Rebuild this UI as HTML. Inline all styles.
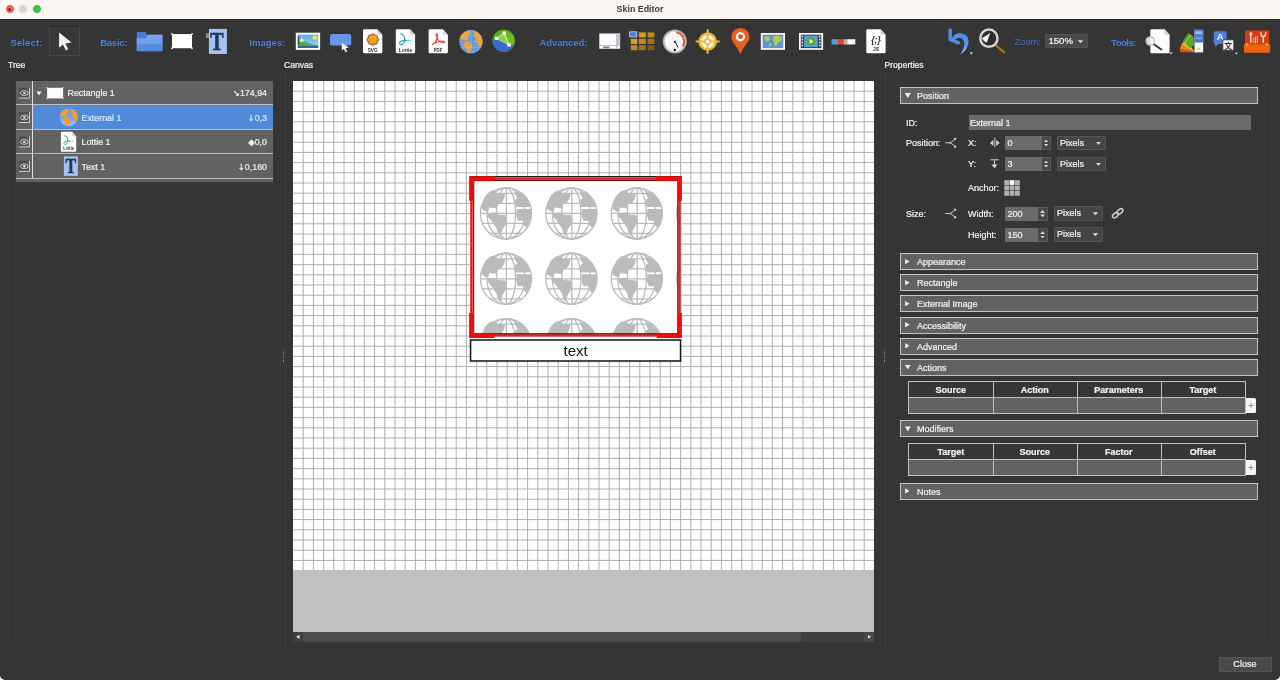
<!DOCTYPE html>
<html lang="en">
<head>
<meta charset="utf-8">
<title>Skin Editor</title>
<style>
*{box-sizing:border-box;margin:0;padding:0}
html,body{width:1280px;height:680px;overflow:hidden;background:#fff}
body{font-family:"Liberation Sans",sans-serif;font-size:9px;color:#f0f0f0;position:relative}
.abs,.abs *{position:absolute}
#win{will-change:transform;position:absolute;left:0;top:0;width:1280px;height:680px;background:#353535;border-radius:0 0 5px 5px;overflow:hidden}
#titlebar{position:absolute;left:0;top:0;width:1280px;height:18.8px;background:#fbf6f2}
.tl{position:absolute;top:5.3px;width:8.2px;height:8.2px;border-radius:50%}
#title{position:absolute;left:0;width:1280px;top:4.1px;text-align:center;font-weight:bold;font-size:8.9px;color:#3b3b3b;letter-spacing:0}
.t{position:absolute;white-space:nowrap;line-height:12px}
.t,.pl,.fld,.dd,.th{-webkit-text-stroke:0.22px currentColor}
.lab{position:absolute;white-space:nowrap;line-height:12px;font-weight:bold;color:#4c82d2;font-size:9.6px;text-shadow:0 0 1px rgba(20,40,90,.9)}
.frame{position:absolute;border:1px solid #3a3a3a}
.ico{position:absolute;overflow:visible}
/* tree */
#tree{position:absolute;left:16px;top:81px;width:256.5px;height:100.5px;background:#626262}
.row{position:absolute;left:0;width:256.5px;height:24.4px;border-bottom:1.2px solid #bdbdbd}
.row.sel .rbg{position:absolute;left:17px;right:0;top:0;bottom:0;background:#528ada}
.vline{position:absolute;left:16px;top:0;width:1.2px;height:96.6px;background:#e0e0e0}
.ar{font-family:"DejaVu Sans",sans-serif;font-size:8.5px}
/* props */
.sec{position:absolute;left:900px;width:357.5px;height:17px;background:#626262;border:1px solid #c4c4c4}
.sec .t{left:16px;top:2px;font-size:9px;color:#f2f2f2}
.tri-d{position:absolute;left:3.7px;top:5px;width:6.2px;height:4.9px;background:#f2f2f2;clip-path:polygon(0 0,100% 0,50% 100%)}
.tri-r{position:absolute;left:4.1px;top:4.6px;width:4.5px;height:5.3px;background:#f2f2f2;clip-path:polygon(0 0,100% 50%,0 100%)}
.fld{position:absolute;background:#6a6a6a;color:#f2f2f2;font-size:9px;line-height:14px;padding-left:2.5px;padding-top:1px;white-space:nowrap}
.dd{position:absolute;background:#454545;border:1px solid #555;color:#f2f2f2;font-size:9px;line-height:13px;padding-left:2px;white-space:nowrap;border-radius:1px}
.dd:after{content:"";position:absolute;right:3.8px;top:5.2px;width:5.6px;height:3px;background:#d6d6d6;clip-path:polygon(0 0,100% 0,50% 100%)}
.spin{position:absolute;width:9.8px;height:14px;background:#474747;border:1px solid #585858;border-left:0}
.spin:before{content:"";position:absolute;left:2.2px;top:2.4px;width:4.8px;height:2.8px;background:#dcdcdc;clip-path:polygon(50% 0,100% 100%,0 100%)}
.spin:after{content:"";position:absolute;left:2.2px;bottom:2.4px;width:4.8px;height:2.8px;background:#dcdcdc;clip-path:polygon(0 0,100% 0,50% 100%)}
.pl{position:absolute;white-space:nowrap;line-height:12px;font-size:9px;color:#f2f2f2}
.tbl{position:absolute;left:907.8px;width:338.7px;height:33.2px;border:1px solid #c0c0c0;background:#626262}
.tbl .h{position:absolute;left:0;top:0;width:100%;height:16.2px;background:#363636}
.tbl .c{position:absolute;top:0;height:31px;width:1px;background:#c0c0c0}
.tbl .hl{position:absolute;left:0;top:15.6px;width:100%;height:1px;background:#c0c0c0}
.tbl .th{position:absolute;top:2.5px;width:84px;text-align:center;font-weight:bold;font-size:9px;line-height:12px;color:#f2f2f2}
.plus{position:absolute;left:1246px;width:9.9px;height:15.6px;background:#f6f6f6;border-radius:0 1.5px 1.5px 0;color:#8c8c8c;font-size:10.5px;line-height:15.6px;text-align:center}
</style>
</head>
<body>
<div id="win">
 <div id="titlebar">
  <div class="tl" style="left:5.5px;background:#fd6a64;border:0.7px solid #d84c4a"></div>
  <div class="tl" style="left:18.9px;background:#d8d5d2"></div>
  <div class="tl" style="left:32.7px;background:#3cc544;border:0.6px solid #2cab36"></div>
  <div style="position:absolute;left:8.1px;top:7.9px;width:3px;height:3px;border-radius:50%;background:#8c1010"></div>
  <div id="title">Skin Editor</div>
 </div>

 <div style="position:absolute;left:0;top:18.8px;width:1280px;height:1.1px;background:#2b2b2b"></div>
 <!-- TOOLBAR -->
 <div id="toolbar">
  <div class="lab" style="left:10.5px;top:36.6px;letter-spacing:0.07px">Select:</div>
  <div style="position:absolute;left:48.6px;top:26.3px;width:31.4px;height:29.8px;background:#383838;border:1px solid #484848;border-top-color:#262626"></div>
  <div class="lab" style="left:100.2px;top:36.6px;letter-spacing:-0.3px">Basic:</div>
  <div class="lab" style="left:249.3px;top:36.6px;letter-spacing:-0.02px">Images:</div>
  <div class="lab" style="left:539.4px;top:36.6px;letter-spacing:-0.12px">Advanced:</div>
  <div class="lab" style="left:1014.4px;top:36.3px;font-weight:normal;font-size:9.3px;color:#4b75ba">Zoom:</div>
  <div class="lab" style="left:1111px;top:36.6px;letter-spacing:-0.5px">Tools:</div>
  <div class="dd" style="left:1045.4px;top:34.1px;width:42.7px;height:14.4px;font-size:9.6px;line-height:12.6px;background:#4a4a4a;border-color:#525252">150%</div>
<svg id="tbicons" class="ico" style="left:0;top:19px" width="1280" height="40" viewBox="0 19 1280 40" font-family="Liberation Sans, sans-serif">
<defs>
 <linearGradient id="gsky" x1="0" y1="0" x2="0" y2="1"><stop offset="0" stop-color="#5aaee6"/><stop offset="1" stop-color="#9ad4ee"/></linearGradient>
 <linearGradient id="gfold" x1="0" y1="0" x2="0" y2="1"><stop offset="0" stop-color="#78a8ee"/><stop offset="0.55" stop-color="#6a9ce8"/><stop offset="0.56" stop-color="#5a8fe0"/><stop offset="1" stop-color="#5088da"/></linearGradient>
 <g id="page"><path d="M0 1.2Q0 0 1.2 0H14.2L19.3 5.6V22.8Q19.3 24 18.1 24H1.2Q0 24 0 22.8Z" fill="#fdfdfd"/><path d="M14.2 0L19.3 5.6H15.2Q14.2 5.6 14.2 4.6Z" fill="#d4d4d4"/></g>
 <linearGradient id="gundo" x1="0" y1="0" x2="0" y2="1"><stop offset="0" stop-color="#4c8cec"/><stop offset="0.6" stop-color="#5c94e6"/><stop offset="1" stop-color="#b4ccee"/></linearGradient>
 <clipPath id="cfan"><rect x="1180.1" y="30" width="15" height="22.5"/></clipPath>
 <clipPath id="cglobe"><circle cx="470.9" cy="41.7" r="11.6"/></clipPath>
 <clipPath id="cgreen"><circle cx="503.7" cy="40.6" r="11.2"/></clipPath>
</defs>
<!-- select arrow -->
<path d="M59.1 32.4V47.8L62.9 44.4L66 50.4L68.3 49.3L65.3 43.4L71.5 42.6Z" fill="#f4f4f4"/>
<!-- folder -->
<path d="M136.7 33Q136.7 31.9 137.8 31.9H144.6Q145.5 31.9 146 32.8L147 34.7H161.4Q162.5 34.7 162.5 35.8V50.1Q162.5 51.2 161.4 51.2H137.8Q136.7 51.2 136.7 50.1Z" fill="#4a7ccc"/>
<path d="M136.7 38.2H145.2Q146.2 38.2 146.7 37.3L147.6 35.6Q148 34.7 149 34.7H161.4Q162.5 34.7 162.5 35.8V50.1Q162.5 51.2 161.4 51.2H137.8Q136.7 51.2 136.7 50.1Z" fill="url(#gfold)"/>
<!-- rectangle -->
<rect x="172" y="34.1" width="20" height="14.1" fill="#fff"/>
<g fill="#e8dcdc"><circle cx="172" cy="34.1" r="1"/><circle cx="192" cy="34.1" r="1"/><circle cx="172" cy="48.2" r="1"/><circle cx="192" cy="48.2" r="1"/></g>
<!-- text icon -->
<rect x="206" y="33.2" width="3" height="4.7" fill="#8c8c8c"/>
<rect x="208.9" y="28.9" width="18" height="25.1" fill="#a6c3f0"/>
<text x="216.9" y="50.4" text-anchor="middle" font-family="Liberation Serif, serif" font-weight="bold" font-size="25.5" fill="#1f3763" stroke="#1f3763" stroke-width="0.7" transform="translate(216.9 0) scale(0.78 1) translate(-216.9 0)">T</text>
<!-- picture -->
<rect x="295.8" y="32.7" width="24.3" height="17.2" fill="#fafafa"/>
<rect x="297.8" y="34.6" width="20.4" height="13.2" fill="url(#gsky)"/>
<path d="M297.8 43.5Q303 39.5 308 42.8Q313 45 318.2 45.5V47.8H297.8Z" fill="#58aa3c"/>
<path d="M299.5 41.5L301.6 37.6L304.2 41.6Z" fill="#f0f0f0"/>
<rect x="297.8" y="36" width="1.5" height="9" fill="#2a5a30"/>
<rect x="297.8" y="46.1" width="20.4" height="1.7" fill="#2c54a6"/>
<circle cx="314.8" cy="37.6" r="2.4" fill="#f2e23a"/>
<!-- button -->
<rect x="330" y="34" width="21.2" height="11.4" rx="2.2" fill="#6a96e4"/>
<path d="M341.8 42.6V50.6L343.9 48.9L345.6 52.3L347.2 51.5L345.6 48.2L348.9 47.8Z" fill="#f0f0f0"/>
<!-- svg file -->
<use href="#page" x="363" y="29.2"/>
<g transform="translate(372.8 39.6)"><g fill="#f2a22c" stroke="#7a4a10" stroke-width="0.8"><circle cx="3.90" cy="0.00" r="1.9"/><circle cx="2.76" cy="2.76" r="1.9"/><circle cx="0.00" cy="3.90" r="1.9"/><circle cx="-2.76" cy="2.76" r="1.9"/><circle cx="-3.90" cy="0.00" r="1.9"/><circle cx="-2.76" cy="-2.76" r="1.9"/><circle cx="-0.00" cy="-3.90" r="1.9"/><circle cx="2.76" cy="-2.76" r="1.9"/></g><circle r="4" fill="#f2a22c"/></g>
<text x="372.7" y="51.6" text-anchor="middle" font-weight="bold" font-size="5.6" fill="#2e2e2e" textLength="10" lengthAdjust="spacingAndGlyphs">SVG</text>
<!-- lottie file -->
<use href="#page" x="395.8" y="29.2"/>
<path d="M400.5 33.8Q404 34.2 404.6 38.2Q405.2 42.6 402.6 44.2Q400.2 45.4 399.6 43.4Q399.2 41.2 403 40.6L407 40.4" fill="none" stroke="#1fa8a0" stroke-width="1.1" stroke-linecap="round"/>
<path d="M407.8 40.4H411.5" stroke="#1fa8a0" stroke-width="1" stroke-dasharray="1.2 0.9" fill="none"/>
<text x="405.5" y="51.5" text-anchor="middle" font-weight="bold" font-size="5.4" fill="#3a3a3a" textLength="13.6" lengthAdjust="spacingAndGlyphs">Lottie</text>
<!-- pdf file -->
<use href="#page" x="428.6" y="29.2"/>
<path d="M432.5 44.6Q435.6 43 437 38.6Q438.2 34.6 437 33.6Q435.8 33.4 436.2 36Q437 40.2 441.2 42.2Q444.4 43.4 444.6 42Q444.4 40.8 440.6 41.2Q436 41.8 433.4 43.8Q431.8 45.2 432.5 44.6Z" fill="none" stroke="#e0403c" stroke-width="1.1" stroke-linejoin="round"/>
<text x="438.1" y="51.5" text-anchor="middle" font-weight="bold" font-size="5.4" fill="#3a3a3a" textLength="8.8" lengthAdjust="spacingAndGlyphs">PDF</text>
<!-- earth -->
<circle cx="470.9" cy="41.7" r="12" fill="#2c446c"/>
<circle cx="470.9" cy="41.7" r="11.6" fill="#6496de"/>
<g clip-path="url(#cglobe)">
 <path d="M460 35L463.5 31.5L469.5 30.5L470.5 33.5L467.5 36.5L469 39L465 40.5L462 39.5L459 40Z" fill="#f5a01e"/>
 <path d="M463.5 42.5L468.5 41.8L472.6 44.5L471.6 48L469.4 52.5L467.6 53L466.4 48.5L463.5 45.5Z" fill="#f5a01e"/>
 <path d="M474.5 31L479 32L483 37L483.5 42.5L481.5 47L478.5 46L477 42L474.8 40.6L476.5 37.5L473.5 35.5Z" fill="#f5a01e"/>
 <g fill="none" stroke="#a9c4ec" stroke-width="0.5" opacity="0.8"><ellipse cx="470.9" cy="41.7" rx="4.5" ry="11.6"/><ellipse cx="470.9" cy="41.7" rx="9" ry="11.6"/><path d="M459 36H483M459 41.7H483M459 47.5H483M470.9 30V54"/></g>
</g>
<!-- green globe -->
<circle cx="503.7" cy="40.6" r="11.6" fill="#2a3c2a"/>
<circle cx="503.7" cy="40.6" r="11.2" fill="#5aaa22"/>
<g clip-path="url(#cgreen)">
 <path d="M496.6 38.4L504.2 32.9L509.1 45Z" fill="#8ed032"/>
 <path d="M504.2 32.9L513 34L515 44L509.1 45Z" fill="#6cbc28"/>
 <path d="M490 40.8Q497 37 503 41.2Q509 46.6 516 44.8V54H490Z" fill="#3c6cc4"/>
 <path d="M496.6 38.4L504.2 32.9L509.1 45Z" fill="none" stroke="#eef6e0" stroke-width="0.8"/>
 <path d="M504.2 32.9L507 40" stroke="#eef6e0" stroke-width="0.6"/>
</g>
<g fill="#fbfbfb"><rect x="494.9" y="36.9" width="3.4" height="3"/><rect x="502.5" y="31.5" width="3.4" height="3"/><rect x="507.3" y="43.4" width="3.6" height="3.2"/></g>
<!-- scroll area -->
<rect x="599.3" y="33.5" width="20.8" height="15.3" fill="#fcfcfc"/>
<rect x="616.8" y="33.5" width="3.3" height="11.7" fill="#c4cbd8"/>
<rect x="599.3" y="45.2" width="20.8" height="0.7" fill="#a0a8b8"/><rect x="616.4" y="33.5" width="0.7" height="15.3" fill="#a0a8b8"/>
<rect x="603" y="46.5" width="6.4" height="1.9" fill="#5a86d4"/>
<!-- grid icon -->
<g>
 <rect x="629.2" y="31.4" width="8" height="6" fill="#c8d8f0"/><rect x="630" y="32.2" width="6.4" height="4.4" fill="#4f80d2"/>
 <rect x="638.8" y="32.4" width="7" height="5" fill="#dc9c20"/><rect x="647.6" y="32.4" width="6.8" height="5" fill="#c48a20"/>
 <rect x="630.8" y="38.8" width="6.6" height="5.2" fill="#dc9c20"/><rect x="638.8" y="38.8" width="7" height="5.2" fill="#c48a20"/><rect x="647.6" y="38.8" width="6.8" height="5.2" fill="#a07220"/>
 <rect x="630.8" y="45.2" width="6.6" height="5" fill="#c48a20"/><rect x="638.8" y="45.2" width="7" height="5" fill="#a07220"/><rect x="647.6" y="45.2" width="6.8" height="5" fill="#7c5a22"/>
</g>
<!-- gauge -->
<circle cx="674.8" cy="41.5" r="12" fill="#b4b4bc"/>
<circle cx="674.8" cy="41.5" r="10.2" fill="#f6f6f8"/>
<path d="M676 32.2A9.4 9.4 0 0 1 682.6 46.6" fill="none" stroke="#e2601e" stroke-width="2"/>
<path d="M675.2 41.8L678 47.6" stroke="#222" stroke-width="1" />
<circle cx="675.1" cy="41.7" r="1.2" fill="#2a3c80"/><circle cx="674.8" cy="49.9" r="1.2" fill="#111"/>
<!-- crosshair -->
<circle cx="707.6" cy="41.5" r="8" fill="#fdf6e0" stroke="#e6b62e" stroke-width="2.6"/>
<path d="M707.6 29.3V53.7M695.6 41.5H719.6" stroke="#e8bc3a" stroke-width="2"/>
<circle cx="707.6" cy="41.5" r="2.6" fill="#fffdf2" stroke="#e6b62e" stroke-width="1.4"/>
<!-- pin -->
<path d="M740.4 54.3Q738.5 49 734 43.5A9.1 9.1 0 1 1 746.8 43.5Q742.3 49 740.4 54.3Z" fill="#e8601c"/>
<circle cx="740.4" cy="36.8" r="4.6" fill="#fff"/><circle cx="740.6" cy="36.6" r="2.4" fill="#e24a1a"/>
<!-- map -->
<rect x="760.8" y="33" width="24.2" height="16.8" fill="#fafafa"/>
<rect x="762.6" y="34.7" width="20.6" height="13.4" fill="#5c92da"/>
<path d="M764 37.5L768 36L770.5 38.5L768 42L765.5 41Z M769 43L771.5 43.5L770.5 47L768.8 46Z M773 36.5L777 35.5L782 37L781.5 41L778 42.5L776.5 46L774.5 45.5L774 41.5L772.5 39.5Z" fill="#b2cc50"/>
<!-- video -->
<rect x="799" y="33" width="24.1" height="16.8" fill="#fafafa"/>
<rect x="800.8" y="34.7" width="20.5" height="13.4" fill="#26364e"/>
<rect x="804.2" y="35.6" width="13.6" height="11.6" fill="#5aa2da"/>
<g fill="#dfe6f0"><rect x="801.6" y="35.6" width="1.6" height="1.8"/><rect x="801.6" y="38.6" width="1.6" height="1.8"/><rect x="801.6" y="41.6" width="1.6" height="1.8"/><rect x="801.6" y="44.6" width="1.6" height="1.8"/><rect x="818.9" y="35.6" width="1.6" height="1.8"/><rect x="818.9" y="38.6" width="1.6" height="1.8"/><rect x="818.9" y="41.6" width="1.6" height="1.8"/><rect x="818.9" y="44.6" width="1.6" height="1.8"/></g>
<circle cx="811" cy="41.4" r="4.4" fill="#4cae2e"/><path d="M809.6 39L813.6 41.4L809.6 43.8Z" fill="#fff"/>
<!-- slider -->
<rect x="831.5" y="39.2" width="6.6" height="5.3" fill="#5a9ae2"/><rect x="838.1" y="39.2" width="5.5" height="5.3" fill="#e0481e"/><rect x="843.6" y="39.2" width="3.6" height="5.3" fill="#b6b6b6"/><rect x="847.2" y="39.2" width="8.1" height="5.3" fill="#f6f6f6"/>
<!-- js file -->
<use href="#page" x="866.3" y="29.2"/>
<text x="876" y="42.6" text-anchor="middle" font-weight="bold" font-style="italic" font-size="8.6" fill="#333">{;}</text>
<text x="876" y="51.3" text-anchor="middle" font-weight="bold" font-size="5" fill="#333">JS</text>
<!-- undo -->
<path d="M950.2 29.9V39.3L958.4 42.9" fill="none" stroke="#4c8cec" stroke-width="3.5" stroke-linejoin="round" stroke-linecap="round"/>
<path d="M951.6 38.6Q954.6 33 960 32.9Q968.6 33.8 968.6 41.6Q968.3 49.6 960.6 54.3Q964.7 48 964.3 42.6Q963.6 37.9 959 37.7Q956 37.9 954.2 40.2Z" fill="url(#gundo)"/>
<path d="M969.6 52.4H973L971.3 54.5Z" fill="#e8e8e8"/>
<!-- magnifier -->
<path d="M995.6 45L1004.2 52.5" stroke="#b86e1c" stroke-width="2.1" stroke-linecap="round"/>
<circle cx="988.9" cy="38.2" r="8.6" fill="#2c2c2c" stroke="#d4d4d4" stroke-width="2.5"/>
<path d="M981.9 38.2L990.3 32.9L986.7 42.8Q983.6 41.4 981.9 38.2Z" fill="#fbfbfb"/>
<!-- tools: search doc -->
<use href="#page" x="1150.3" y="29.2"/>
<path d="M1153.5 44L1161.3 49.6" stroke="#4a2c14" stroke-width="1.8" stroke-linecap="round"/>
<circle cx="1150.2" cy="41" r="4.2" fill="#fcfcfc" fill-opacity="0.85" stroke="#b8b8b8" stroke-width="1.3"/>
<path d="M1169.6 52.6H1172.6L1171.1 54.4Z" fill="#e0e0e0"/>
<!-- colour fan -->
<g clip-path="url(#cfan)"><path d="M1194.9 52.4L1179.4 52.4A15.5 15.5 0 0 1 1179.9 48.4Z" fill="#e4481c"/><path d="M1194.9 52.4L1179.9 48.7A15.5 15.5 0 0 1 1181.3 44.9Z" fill="#f07a1e"/><path d="M1194.9 52.4L1181.2 45.1A15.5 15.5 0 0 1 1183.4 42.0Z" fill="#f4a822"/><path d="M1194.9 52.4L1183.2 42.2A15.5 15.5 0 0 1 1186.2 39.5Z" fill="#f4d83a"/><path d="M1183 40.8L1188.5 33L1193.7 36.9L1194.2 45.5L1190 48Z" fill="#58a02a"/><path d="M1185.2 42.6L1191 34.9" stroke="#9ad24a" stroke-width="1.2"/><path d="M1187.6 45L1192.6 38" stroke="#84c43a" stroke-width="0.8"/></g>
<rect x="1194.5" y="29.8" width="8.7" height="22.6" fill="#f6f6f6"/>
<rect x="1194.5" y="29.8" width="8.7" height="12.7" fill="#4a78d0"/>
<rect x="1195.4" y="31.2" width="6.9" height="3" fill="#9cbcee"/><rect x="1195.4" y="37.6" width="6.9" height="1.4" fill="#86aae6"/>
<circle cx="1198.9" cy="48.9" r="1" fill="#e6c020"/>
<!-- translate -->
<path d="M1213.8 32.8Q1213.8 31.3 1215.3 31.3H1225.2Q1226.7 31.3 1226.7 32.8V42.5Q1226.7 44 1225.2 44H1218.6L1215.2 47.3V44Q1213.8 44 1213.8 42.5Z" fill="#4a82da"/>
<text x="1220.2" y="40.4" text-anchor="middle" font-weight="bold" font-size="9.6" fill="#fff">A</text>
<rect x="1222.8" y="39.8" width="11" height="10.4" fill="#f4f4f4" stroke="#3a3a44" stroke-width="0.9"/>
<text x="1228.3" y="48.6" text-anchor="middle" font-family="Liberation Sans, Noto Sans CJK SC, sans-serif" font-weight="bold" font-size="8" fill="#46284a">文</text>
<path d="M1234.8 52.8H1238L1236.4 54.6Z" fill="#e0e0e0"/>
<!-- toolbox -->
<path d="M1245 30.4H1269.2V44.6H1245Z" fill="#d63a10"/>
<path d="M1243.9 44.2H1270.1V51.8Q1270.1 52.8 1269.1 52.8H1244.9Q1243.9 52.8 1243.9 51.8Z" fill="#f0620c"/>
<g fill="#f6d2c4"><rect x="1250.1" y="35" width="1.5" height="8"/><ellipse cx="1250.85" cy="34" rx="1.5" ry="2"/><rect x="1253.4" y="37.6" width="0.9" height="5.6"/><rect x="1255.1" y="36.6" width="0.9" height="6.6"/><rect x="1256.8" y="35.8" width="0.9" height="7.4"/><rect x="1262.4" y="36.4" width="1.7" height="6.4"/></g>
<path d="M1260.6 32.4L1261.6 36.2H1264.9L1265.9 32.4" fill="none" stroke="#f6d2c4" stroke-width="1.6"/>
<circle cx="1246.9" cy="44.3" r="1.4" fill="#f8a044"/><circle cx="1266.8" cy="44.3" r="1.4" fill="#f8a044"/>
</svg>
 </div>

 <!-- PANEL LABELS + FRAMES -->
 <div class="t" style="left:8px;top:59px;font-size:8.6px">Tree</div>
 <div class="t" style="left:284px;top:59px;font-size:8.6px">Canvas</div>
 <div class="t" style="left:884.5px;top:59px;font-size:8.6px">Properties</div>
 <div class="frame" style="left:9px;top:72px;width:272px;height:578px"></div>
 <div class="frame" style="left:15px;top:78px;width:258.5px;height:564px;border-color:#393939"></div>
 <div class="frame" style="left:285px;top:72px;width:596px;height:578px"></div>
 <div class="frame" style="left:885px;top:72px;width:386px;height:578px"></div>
 <div class="frame" style="left:891px;top:78px;width:373.5px;height:564px;border-color:#393939"></div>

 <div style="position:absolute;left:283px;top:350px;width:0.9px;height:12.6px;background:repeating-linear-gradient(to bottom,#8a8a8a 0,#8a8a8a 1.1px,transparent 1.1px,transparent 2.1px)"></div>
 <div style="position:absolute;left:884px;top:350px;width:0.9px;height:12.6px;background:repeating-linear-gradient(to bottom,#8a8a8a 0,#8a8a8a 1.1px,transparent 1.1px,transparent 2.1px)"></div>
 <!-- TREE -->
 <div id="tree">
  <div class="row" style="top:0"></div>
  <div class="row sel" style="top:24.4px"><div class="rbg"></div></div>
  <div class="row" style="top:48.8px"></div>
  <div class="row" style="top:73.2px"></div>
<svg class="ico" style="left:0;top:0" width="256.5" height="100.5" viewBox="16 81 256.5 100.5" font-family="Liberation Sans, sans-serif">
<defs><clipPath id="cte"><circle cx="68.8" cy="117.1" r="9"/></clipPath>
<linearGradient id="gte" x1="0" y1="0" x2="0" y2="1"><stop offset="0" stop-color="#6a98de"/><stop offset="0.6" stop-color="#7ea6e2"/><stop offset="1" stop-color="#a8c2ea"/></linearGradient></defs>
<rect x="19" y="87.7" width="10.8" height="10.8" fill="#4e4e4e"/><path d="M19 98.1H29.4V87.7" fill="none" stroke="#e4e4e4" stroke-width="0.9"/><ellipse cx="24.3" cy="93.1" rx="3.9" ry="2.4" fill="none" stroke="#ececec" stroke-width="0.8"/><circle cx="24.3" cy="93.1" r="1.2" fill="#ececec"/><rect x="19" y="112.1" width="10.8" height="10.8" fill="#4e4e4e"/><path d="M19 122.5H29.4V112.1" fill="none" stroke="#e4e4e4" stroke-width="0.9"/><ellipse cx="24.3" cy="117.5" rx="3.9" ry="2.4" fill="none" stroke="#ececec" stroke-width="0.8"/><circle cx="24.3" cy="117.5" r="1.2" fill="#ececec"/><rect x="19" y="136.5" width="10.8" height="10.8" fill="#4e4e4e"/><path d="M19 146.9H29.4V136.5" fill="none" stroke="#e4e4e4" stroke-width="0.9"/><ellipse cx="24.3" cy="141.9" rx="3.9" ry="2.4" fill="none" stroke="#ececec" stroke-width="0.8"/><circle cx="24.3" cy="141.9" r="1.2" fill="#ececec"/><rect x="19" y="160.9" width="10.8" height="10.8" fill="#4e4e4e"/><path d="M19 171.3H29.4V160.9" fill="none" stroke="#e4e4e4" stroke-width="0.9"/><ellipse cx="24.3" cy="166.3" rx="3.9" ry="2.4" fill="none" stroke="#ececec" stroke-width="0.8"/><circle cx="24.3" cy="166.3" r="1.2" fill="#ececec"/>
<path d="M36.3 91.4H41.7L39 95.3Z" fill="#f4f4f4"/>
<rect x="47.1" y="87.8" width="16" height="10.6" fill="#fdfdfd"/>
<g fill="#d8d0d0"><circle cx="47.1" cy="87.8" r="0.8"/><circle cx="63.1" cy="87.8" r="0.8"/><circle cx="47.1" cy="98.4" r="0.8"/><circle cx="63.1" cy="98.4" r="0.8"/></g>
<!-- external globe -->
<circle cx="68.8" cy="117.1" r="9.1" fill="url(#gte)"/>
<g clip-path="url(#cte)" fill="#f6a01c">
 <path d="M60.5 112.5L63.2 109.6L67.8 108.8L68.6 111.2L66.2 113.4L67.4 115.4L64.4 116.4L62 115.8L59.8 116.2Z"/>
 <path d="M63.2 118L67 117.4L70.2 119.6L69.4 122.4L67.6 125.8L66.2 126.2L65.4 122.6L63.2 120.4Z"/>
 <path d="M71.6 108.8L75 109.6L78.2 113.4L78.6 117.8L77 121.2L74.8 120.4L73.6 117.4L71.8 116.2L73.2 113.8L70.8 112.4Z"/>
</g>
<!-- lottie page -->
<g transform="translate(60.9 131.8) scale(0.793 0.829)"><path d="M0 1.2Q0 0 1.2 0H14.2L19.3 5.6V22.8Q19.3 24 18.1 24H1.2Q0 24 0 22.8Z" fill="#fdfdfd"/><path d="M14.2 0L19.3 5.6H15.2Q14.2 5.6 14.2 4.6Z" fill="#d4d4d4"/>
<path d="M4.7 4.6Q8.2 5 8.8 9Q9.4 13.4 6.8 15Q4.4 16.2 3.8 14.2Q3.4 12 7.2 11.4L11.2 11.2" fill="none" stroke="#1fa8a0" stroke-width="1.2" stroke-linecap="round"/><path d="M12 11.2H15.7" stroke="#1fa8a0" stroke-width="1" stroke-dasharray="1.2 0.9" fill="none"/>
<text x="9.7" y="22.3" text-anchor="middle" font-weight="bold" font-size="5.4" fill="#3a3a3a" textLength="13.6" lengthAdjust="spacingAndGlyphs">Lottie</text></g>
<!-- text icon -->
<rect x="63.9" y="156.4" width="14" height="19.5" fill="#a6c3f0"/>
<text x="70.9" y="173" text-anchor="middle" font-family="Liberation Serif, serif" font-weight="bold" font-size="20" fill="#1f3763" stroke="#1f3763" stroke-width="0.5" transform="translate(70.9 0) scale(0.8 1) translate(-70.9 0)">T</text>
</svg>
  <div class="vline"></div>
  <div class="t" style="left:51.5px;top:6.1px;font-size:8.85px">Rectangle 1</div>
  <div class="t" style="left:65.5px;top:30.6px;font-size:8.85px;color:#d4e8ff">External 1</div>
  <div class="t" style="left:65.5px;top:55px;font-size:8.85px">Lottie 1</div>
  <div class="t" style="left:65.5px;top:79.5px;font-size:8.85px">Text 1</div>
  <div class="t" style="right:5.5px;top:6.1px;font-size:8.85px"><span class="ar">&#8600;</span>174,94</div>
  <div class="t" style="right:5.5px;top:30.6px;font-size:8.85px;color:#d4e8ff"><span class="ar">&#8595;</span>0,3</div>
  <div class="t" style="right:5.5px;top:55px;font-size:8.85px"><span class="ar">&#9670;</span>0,0</div>
  <div class="t" style="right:5.5px;top:79.5px;font-size:8.85px"><span class="ar">&#8595;</span>0,160</div>
 </div>

 <!-- CANVAS -->
 <div id="canvas" style="position:absolute;left:293px;top:80.8px;width:580.7px;height:551.2px;background:#c0c0c0;overflow:hidden">
  <div id="grid" style="position:absolute;left:0;top:0;width:581px;height:489px;background:#fff"></div>
  <svg id="cv" class="ico" style="left:0;top:0.2px" width="581" height="551" viewBox="293 81 581 551">
<defs><symbol id="gl" viewBox="0 0 60 60" overflow="visible"><g fill="none" stroke="#bbb" stroke-width="1.3"><circle cx="30" cy="30" r="25.6"/><ellipse cx="30" cy="30" rx="9.5" ry="25.6"/><ellipse cx="30" cy="30" rx="19" ry="25.6"/><path d="M30.4 4V56M13.5 10H46.5M6.3 20H53.7M4 30H56M6.3 40H53.7M13.5 50H46.5"/></g><g fill="#bbb"><polygon points="19.0,6.7 21.2,10.1 29.1,10.5 28.1,15.3 25.6,19.3 21.6,20.6 20.7,25.1 13.2,24.2 12.3,28.6 8.8,27.7 5.5,25.1 6.3,18.9 9.7,11.8 14.1,7.8"/><polygon points="11.5,29.5 19.0,29.0 22.1,31.2 29.1,31.7 31.1,35.6 30.2,40.1 26.5,46.2 24.3,52.6 22.5,51.5 20.3,44.5 15.4,37.4 11.5,33.0"/><polygon points="38.8,7.4 44.1,9.0 50.7,14.0 54.5,21.1 55.1,23.5 40.6,23.6 37.9,20.6 39.3,16.2 41.5,14.5 38.8,10.9"/><polygon points="40.6,25.5 55.6,25.5 56.1,29.9 54.3,38.3 50.7,44.7 48.1,41.8 47.2,37.4 41.9,37.4 40.2,32.1"/></g></symbol><clipPath id="cimg"><rect x="470" y="179" width="208" height="155.5"/></clipPath></defs>
<path d="M303.20 81V570M313.40 81V570M323.60 81V570M333.80 81V570M344.00 81V570M354.20 81V570M364.40 81V570M374.60 81V570M384.80 81V570M395.00 81V570M405.20 81V570M415.40 81V570M425.60 81V570M435.80 81V570M446.00 81V570M456.20 81V570M466.40 81V570M476.60 81V570M486.80 81V570M497.00 81V570M507.20 81V570M517.40 81V570M527.60 81V570M537.80 81V570M548.00 81V570M558.20 81V570M568.40 81V570M578.60 81V570M588.80 81V570M599.00 81V570M609.20 81V570M619.40 81V570M629.60 81V570M639.80 81V570M650.00 81V570M660.20 81V570M670.40 81V570M680.60 81V570M690.80 81V570M701.00 81V570M711.20 81V570M721.40 81V570M731.60 81V570M741.80 81V570M752.00 81V570M762.20 81V570M772.40 81V570M782.60 81V570M792.80 81V570M803.00 81V570M813.20 81V570M823.40 81V570M833.60 81V570M843.80 81V570M854.00 81V570M864.20 81V570M293 91.20H874M293 101.40H874M293 111.60H874M293 121.80H874M293 132.00H874M293 142.20H874M293 152.40H874M293 162.60H874M293 172.80H874M293 183.00H874M293 193.20H874M293 203.40H874M293 213.60H874M293 223.80H874M293 234.00H874M293 244.20H874M293 254.40H874M293 264.60H874M293 274.80H874M293 285.00H874M293 295.20H874M293 305.40H874M293 315.60H874M293 325.80H874M293 336.00H874M293 346.20H874M293 356.40H874M293 366.60H874M293 376.80H874M293 387.00H874M293 397.20H874M293 407.40H874M293 417.60H874M293 427.80H874M293 438.00H874M293 448.20H874M293 458.40H874M293 468.60H874M293 478.80H874M293 489.00H874M293 499.20H874M293 509.40H874M293 519.60H874M293 529.80H874M293 540.00H874M293 550.20H874M293 560.40H874" stroke="#b0b0b0" stroke-width="1" fill="none"/>
<rect x="469.6" y="176" width="212" height="164" fill="#fff"/>
<g clip-path="url(#cimg)"><use href="#gl" x="476.0" y="183.4" width="60" height="60"/><use href="#gl" x="541.4" y="183.4" width="60" height="60"/><use href="#gl" x="606.8" y="183.4" width="60" height="60"/><use href="#gl" x="672.2" y="183.4" width="60" height="60"/><use href="#gl" x="476.0" y="248.8" width="60" height="60"/><use href="#gl" x="541.4" y="248.8" width="60" height="60"/><use href="#gl" x="606.8" y="248.8" width="60" height="60"/><use href="#gl" x="672.2" y="248.8" width="60" height="60"/><use href="#gl" x="476.0" y="314.2" width="60" height="60"/><use href="#gl" x="541.4" y="314.2" width="60" height="60"/><use href="#gl" x="606.8" y="314.2" width="60" height="60"/><use href="#gl" x="672.2" y="314.2" width="60" height="60"/></g>
<!-- rectangle 1 black border (top) -->
<rect x="469.6" y="176" width="212" height="1.3" fill="#1a1a1a"/>
<!-- selection: thin red frame with dark inner edge -->
<rect x="471.45" y="178.65" width="208.1" height="156.75" fill="none" stroke="#e62020" stroke-width="2.6"/>
<rect x="473.7" y="180.6" width="204.1" height="153.1" fill="none" stroke="#4a1414" stroke-width="1.1"/>
<!-- corner brackets -->
<path d="M471.4 200.7V178.45H494.4M656.4 178.45H679.6V200.7M679.6 313V335.8H656.6M494.4 335.8H471.4V313" fill="none" stroke="#f40a0a" stroke-width="4.6" stroke-linejoin="miter"/>
<!-- text box -->
<rect x="470.55" y="340" width="210" height="21" fill="#fff" stroke="#111" stroke-width="1.5"/>
<text x="575.7" y="355.6" text-anchor="middle" font-family="Liberation Sans, sans-serif" font-size="15" fill="#111">text</text>
</svg>
 </div>
 <div id="hscroll" style="position:absolute;left:293px;top:632px;width:580.7px;height:9.5px;background:#3e3e3e">
  <div style="position:absolute;left:10px;top:0;width:497.5px;height:9.5px;background:#4b4b4b"></div>
  <div style="position:absolute;left:3.2px;top:2.5px;width:3.4px;height:4.6px;background:#dedede;clip-path:polygon(100% 0,100% 100%,0 50%)"></div>
  <div style="position:absolute;left:571px;top:0;width:10px;height:9.5px;background:#474747"></div>
  <div style="position:absolute;left:574.6px;top:2.5px;width:3.4px;height:4.6px;background:#dedede;clip-path:polygon(0 0,100% 50%,0 100%)"></div>
 </div>

 <!-- PROPERTIES -->
 <div id="props">
  <div class="sec" style="top:87px"><div class="tri-d"></div><div class="t">Position</div></div>
  <div class="sec" style="top:253.3px"><div class="tri-r"></div><div class="t">Appearance</div></div>
  <div class="sec" style="top:274.4px"><div class="tri-r"></div><div class="t">Rectangle</div></div>
  <div class="sec" style="top:295.4px"><div class="tri-r"></div><div class="t">External Image</div></div>
  <div class="sec" style="top:316.5px"><div class="tri-r"></div><div class="t">Accessibility</div></div>
  <div class="sec" style="top:337.5px"><div class="tri-r"></div><div class="t">Advanced</div></div>
  <div class="sec" style="top:358.6px"><div class="tri-d"></div><div class="t">Actions</div></div>
  <div class="sec" style="top:420.4px"><div class="tri-d"></div><div class="t">Modifiers</div></div>
  <div class="sec" style="top:482.7px"><div class="tri-r"></div><div class="t">Notes</div></div>

<svg class="ico" style="left:885px;top:72px" width="386" height="578" viewBox="885 72 386 578">
<path d="M945.5 142.8H949.3Q951 142.8 952.2 141.5L955 139.2M949.3 142.8Q951 142.8 952.2 144.1L955 146.4" fill="none" stroke="#d2d2d2" stroke-width="1" stroke-linecap="round"/><path d="M953.6 137.8L956.6 138.2L955.4 140.6ZM953.6 147.8L956.6 147.4L955.4 145.0Z" fill="#d2d2d2"/><path d="M945.5 213.5H949.3Q951 213.5 952.2 212.2L955 209.9M949.3 213.5Q951 213.5 952.2 214.8L955 217.1" fill="none" stroke="#d2d2d2" stroke-width="1" stroke-linecap="round"/><path d="M953.6 208.5L956.6 208.9L955.4 211.3ZM953.6 218.5L956.6 218.1L955.4 215.7Z" fill="#d2d2d2"/>
<path d="M994.8 137.6V147" stroke="#d4d4d4" stroke-width="0.9" fill="none"/>
<path d="M990 142.9L993.4 139.8V146ZM999.6 142.9L996.2 139.8V146Z" fill="#d4d4d4"/>
<g stroke="#d4d4d4" stroke-width="1" fill="none"><path d="M990.4 159.8H998.7M994.5 160.4V166.6"/></g>
<path d="M991.5 164.4H997.5L994.5 168.3Z" fill="#d4d4d4"/>
<rect x="1004.30" y="180.20" width="4.75" height="4.75" fill="#b4b4b4"/><rect x="1009.67" y="180.20" width="4.75" height="4.75" fill="#ffffff"/><rect x="1015.04" y="180.20" width="4.75" height="4.75" fill="#b4b4b4"/><rect x="1004.30" y="185.57" width="4.75" height="4.75" fill="#b4b4b4"/><rect x="1009.67" y="185.57" width="4.75" height="4.75" fill="#b4b4b4"/><rect x="1015.04" y="185.57" width="4.75" height="4.75" fill="#b4b4b4"/><rect x="1004.30" y="190.94" width="4.75" height="4.75" fill="#b4b4b4"/><rect x="1009.67" y="190.94" width="4.75" height="4.75" fill="#b4b4b4"/><rect x="1015.04" y="190.94" width="4.75" height="4.75" fill="#b4b4b4"/>
<g transform="translate(1117.7 213.3) rotate(-40)" fill="none" stroke="#d2d2d2" stroke-width="1.5"><rect x="-6.2" y="-1.9" width="6.4" height="3.8" rx="1.9"/><rect x="-0.2" y="-1.9" width="6.4" height="3.8" rx="1.9"/></g>
</svg>
  <div class="pl" style="left:906px;top:116.5px">ID:</div>
  <div class="fld" style="left:968.8px;top:115.4px;width:282.2px;height:14.6px;padding-left:1.3px">External 1</div>
  <div class="pl" style="left:906px;top:137.3px">Position:</div>
  <div class="pl" style="left:968px;top:137.3px">X:</div>
  <div class="fld" style="left:1005px;top:136.2px;width:36.5px;height:13.6px;line-height:13.6px">0</div>
  <div class="spin" style="left:1041.5px;top:136.2px;height:13.6px"></div>
  <div class="dd" style="left:1057px;top:135.5px;width:49px;height:14.8px">Pixels</div>
  <div class="pl" style="left:968px;top:158.4px">Y:</div>
  <div class="fld" style="left:1005px;top:157.3px;width:36.5px;height:13.6px;line-height:13.6px">3</div>
  <div class="spin" style="left:1041.5px;top:157.3px;height:13.6px"></div>
  <div class="dd" style="left:1057px;top:156.6px;width:49px;height:14.8px">Pixels</div>
  <div class="pl" style="left:968px;top:182.3px">Anchor:</div>
  <div class="pl" style="left:906px;top:207.8px">Size:</div>
  <div class="pl" style="left:968px;top:207.8px">Width:</div>
  <div class="fld" style="left:1005px;top:206.7px;width:33px;height:13.9px;line-height:13.9px">200</div>
  <div class="spin" style="left:1038px;top:206.7px;height:13.9px"></div>
  <div class="dd" style="left:1054px;top:206px;width:49px;height:14.8px">Pixels</div>
  <div class="pl" style="left:968px;top:228.9px">Height:</div>
  <div class="fld" style="left:1005px;top:227.8px;width:33px;height:13.9px;line-height:13.9px">150</div>
  <div class="spin" style="left:1038px;top:227.8px;height:13.9px"></div>
  <div class="dd" style="left:1054px;top:227.1px;width:49px;height:14.8px">Pixels</div>

  <div class="tbl" style="top:380.6px">
   <div class="h"></div><div class="hl"></div>
   <div class="c" style="left:84.2px"></div><div class="c" style="left:168.3px"></div><div class="c" style="left:252.2px"></div>
   <div class="th" style="left:0">Source</div><div class="th" style="left:84px">Action</div><div class="th" style="left:168px">Parameters</div><div class="th" style="left:252px">Target</div>
  </div>
  <div class="plus" style="top:397.8px">+</div>
  <div class="tbl" style="top:442.6px">
   <div class="h"></div><div class="hl"></div>
   <div class="c" style="left:84.2px"></div><div class="c" style="left:168.3px"></div><div class="c" style="left:252.2px"></div>
   <div class="th" style="left:0">Target</div><div class="th" style="left:84px">Source</div><div class="th" style="left:168px">Factor</div><div class="th" style="left:252px">Offset</div>
  </div>
  <div class="plus" style="top:459.8px">+</div>
 </div>

 <div class="t" style="left:1219.4px;top:657.2px;width:52.6px;height:15.2px;background:#494949;border:1px solid #565656;text-align:center;font-size:9.1px;line-height:13.8px;color:#f2f2f2;padding-right:1.4px">Close</div>
</div>
</body>
</html>
